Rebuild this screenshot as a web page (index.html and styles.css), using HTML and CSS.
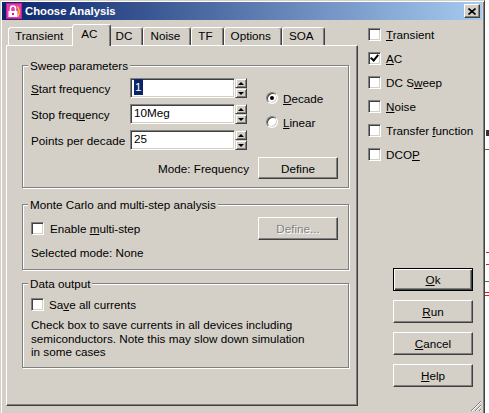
FILE: index.html
```html
<!DOCTYPE html>
<html lang="en">
<head>
  <meta charset="UTF-8" />
  <title>Choose Analysis</title>
  <link rel="stylesheet" href="styles.css">
</head>
<body>

<!-- ===== Dialog ===== -->
<div class="dialog">
  <div class="titlebar">
    <svg class="app-icon" viewBox="0 0 16 16">
      <rect width="16" height="16" fill="#c81e8e"/>
      <rect x="1" y="1" width="14" height="14" fill="#e43cae"/>
      <path d="M4.5 8V5.5a2.5 2.5 0 0 1 5 0V8" stroke="#fff" stroke-width="1.5" fill="none"/>
      <rect x="2.5" y="8" width="9" height="6" fill="#fff"/>
      <rect x="6" y="10" width="2" height="2" fill="#c81e8e"/>
      <path d="M11 3.5q4 3.5 1 10" stroke="#f4d400" stroke-width="1.3" fill="none"/>
    </svg>
    <span class="title">Choose Analysis</span>
    <span class="close">
      <svg width="8" height="7" viewBox="0 0 8 7"><path d="M0.5 0.5l7 6M7.5 0.5l-7 6" stroke="#000" stroke-width="1.6"/></svg>
    </span>
  </div>

  <div class="content">
    <!-- tabs + page -->
    <div class="tabs-area">
      <div class="tabs">
        <div class="tab">Transient</div>
        <div class="tab active">AC</div>
        <div class="tab">DC</div>
        <div class="tab">Noise</div>
        <div class="tab">TF</div>
        <div class="tab">Options</div>
        <div class="tab">SOA</div>
      </div>

      <div class="panel">
        <div class="group sweep-group">
          <span class="group-title">Sweep parameters</span>
          <div class="sweep">
            <div class="fields">
              <div class="field">
                <label><u>S</u>tart frequency</label>
                <div class="edit"><span class="sel">1</span></div>
                <div class="spin"><span class="up"></span><span class="down"></span></div>
              </div>
              <div class="field">
                <label>Stop freq<u>u</u>ency</label>
                <div class="edit">10Meg</div>
                <div class="spin"><span class="up"></span><span class="down"></span></div>
              </div>
              <div class="field">
                <label>Points per decade</label>
                <div class="edit">25</div>
                <div class="spin"><span class="up"></span><span class="down"></span></div>
              </div>
            </div>
            <div class="radios">
              <div class="radio-row"><span class="radio on"></span><span><u>D</u>ecade</span></div>
              <div class="radio-row"><span class="radio"></span><span><u>L</u>inear</span></div>
            </div>
          </div>
          <div class="mode">
            <span>Mode: Frequency</span>
            <span class="btn">Define</span>
          </div>
        </div>

        <div class="group multi-group">
          <span class="group-title">Monte Carlo and multi-step analysis</span>
          <div class="multi">
            <div class="check-row"><span class="check"></span><span>Enable <u>m</u>ulti-step</span></div>
            <span class="btn disabled">Define...</span>
          </div>
          <div class="selected-mode">Selected mode: None</div>
        </div>

        <div class="group data-group">
          <span class="group-title">Data output</span>
          <div class="check-row"><span class="check"></span><span>Sa<u>v</u>e all currents</span></div>
          <p class="note">Check box to save currents in all devices including<br>semiconductors. Note this may slow down simulation<br>in some cases</p>
        </div>
      </div>
    </div>

    <!-- analysis list + buttons -->
    <div class="side">
      <div class="checks">
        <div class="check-row"><span class="check"></span><span><u>T</u>ransient</span></div>
        <div class="check-row"><span class="check on"></span><span><u>A</u>C</span></div>
        <div class="check-row"><span class="check"></span><span>DC S<u>w</u>eep</span></div>
        <div class="check-row"><span class="check"></span><span><u>N</u>oise</span></div>
        <div class="check-row"><span class="check"></span><span>Transfer <u>f</u>unction</span></div>
        <div class="check-row"><span class="check"></span><span>DCO<u>P</u></span></div>
      </div>
      <div class="buttons">
        <span class="btn default"><span><u>O</u>k</span></span>
        <span class="btn"><span><u>R</u>un</span></span>
        <span class="btn"><span><u>C</u>ancel</span></span>
        <span class="btn"><span><u>H</u>elp</span></span>
      </div>
    </div>
  </div>

  <svg class="grip" width="12" height="12" viewBox="0 0 12 12">
    <path d="M11 1L1 11M11 5L5 11M11 9L9 11" stroke="#808080" stroke-width="1"/>
    <path d="M11 2L2 11M11 6L6 11M11 10L10 11" stroke="#fff" stroke-width="1"/>
  </svg>
</div>

<!-- bits of the schematic behind the dialog -->
<svg class="behind" width="4" height="413" viewBox="0 0 4 413">
  <rect x="0" y="149" width="4" height="1" fill="#2a8a2a"/>
  <rect x="1" y="130" width="3" height="6" fill="#333"/>
  <rect x="1" y="252" width="3" height="1" fill="#e02020"/>
  <rect x="1" y="264" width="3" height="1" fill="#e02020"/>
  <rect x="0" y="281" width="4" height="1" fill="#2a8a2a"/>
  <rect x="0" y="292" width="4" height="1" fill="#e02020"/>
  <rect x="0" y="295" width="4" height="1" fill="#e02020"/>
</svg>

</body>
</html>
```

FILE: styles.css
```css
:root { --face:#d4d0c8; --shadow:#808080; --dark:#404040; --hilite:#fff; }
* { box-sizing:border-box; }
body {
  margin:0; height:413px; overflow:hidden; background:#fff; display:flex; align-items:flex-start;
  font:11.7px "Liberation Sans", Arial, sans-serif; color:#000;
}
u { text-decoration:underline; text-underline-offset:1px; }

/* ===== Window frame ===== */
.dialog{
  position:relative;width:485px;height:416px;flex:none;background:var(--face);
  border:1px solid;border-color:var(--face) var(--dark) var(--dark) var(--face);
  box-shadow:inset 1px 1px var(--hilite),inset -1px -1px var(--shadow);
  padding:1px 2px 2px 1px;
}
.titlebar{
  height:18px;display:flex;align-items:center;color:#fff;
  background:linear-gradient(to right,#0a246a,#a6caf0);
}
.app-icon{width:16px;height:16px;margin-left:4px;}
.title{margin-left:3px;font-weight:bold;font-size:11.3px;}
.close{
  margin-left:auto;margin-right:2px;width:16px;height:14px;background:var(--face);
  display:flex;align-items:center;justify-content:center;
  border:1px solid;border-color:var(--hilite) var(--dark) var(--dark) var(--hilite);
  box-shadow:inset -1px -1px var(--shadow);
}
.grip{position:absolute;right:2px;bottom:3px;}
.behind{flex:none;}

.content{display:flex;align-items:flex-start;}

/* ===== Tabs ===== */
.tabs-area{margin-left:4px;padding-top:4px;width:352px;flex:none;}
.tabs{display:flex;align-items:flex-end;height:21px;padding-left:2px;}
.tab{
  height:18px;line-height:16px;padding:0 10px 0 6px;background:var(--face);
  border:1px solid;border-bottom:none;border-color:var(--hilite) var(--dark) transparent var(--hilite);
  box-shadow:inset -1px 0 var(--shadow);border-radius:3px 3px 0 0;
}
.tab.active{
  position:relative;z-index:1;height:22px;margin:0 -2px -1px;padding:0 12px 0 8px;line-height:18px;
}
.panel{
  height:361px;padding:19px 0 0 15px;
  border:1px solid;border-color:var(--hilite) var(--dark) var(--dark) var(--hilite);
  box-shadow:inset -1px -1px var(--shadow);
}

/* ===== Group boxes ===== */
.group{
  position:relative;width:327px;padding:12px 0 0 8px;
  border:1px solid var(--shadow);box-shadow:inset 1px 1px var(--hilite),1px 1px var(--hilite);
}
.group-title{
  position:absolute;top:-7px;left:5px;padding:0 2px;line-height:13px;background:var(--face);
}
.sweep-group{padding-bottom:8px;}
.multi-group{margin-top:16px;padding-bottom:10px;}
.data-group{margin-top:13px;padding-top:13px;padding-bottom:8px;}

.sweep{display:flex;}
.fields{width:216px;display:flex;flex-direction:column;gap:6px;}
.field{display:flex;align-items:center;height:20px;}
.field label{width:99px;white-space:nowrap;}
.edit{
  width:105px;height:20px;background:#fff;padding:0 3px;line-height:16px;
  border:1px solid;border-color:var(--shadow) var(--hilite) var(--hilite) var(--shadow);
  box-shadow:inset 1px 1px var(--dark),inset -1px -1px var(--face);
}
.sel{display:inline-block;background:#0a246a;color:#fff;padding:0 1px;}
.spin{width:12px;height:20px;display:flex;flex-direction:column;}
.spin span{
  height:10px;display:flex;align-items:center;justify-content:center;background:var(--face);
  border:1px solid;border-color:var(--face) var(--dark) var(--dark) var(--face);
  box-shadow:inset 1px 1px var(--hilite),inset -1px -1px var(--shadow);
}
.spin span::before{content:"";border-left:3px solid transparent;border-right:3px solid transparent;}
.spin .up::before{border-bottom:3px solid #000;}
.spin .down::before{border-top:3px solid #000;}

.radios{margin:12px 0 0 19px;display:flex;flex-direction:column;gap:8px;}
.radio-row{display:flex;align-items:center;gap:5px;height:16px;}
.radio{
  width:12px;height:12px;border-radius:50%;background:#fff;display:flex;align-items:center;justify-content:center;
  border:1px solid;border-color:var(--shadow) var(--hilite) var(--hilite) var(--shadow);
  box-shadow:inset 1px 1px var(--dark),inset -1px -1px var(--face);
}
.radio.on::after{content:"";width:4px;height:4px;border-radius:50%;background:#000;}

.mode{display:flex;align-items:center;justify-content:flex-end;gap:9px;margin-top:7px;padding-right:10px;}

.multi{display:flex;align-items:center;justify-content:space-between;height:23px;padding-right:10px;}
.selected-mode{margin-top:6px;line-height:13px;}

.note{margin:7px 0 0;line-height:13.5px;white-space:nowrap;}

/* ===== Checkboxes ===== */
.check-row{display:flex;align-items:center;gap:5px;height:14px;white-space:nowrap;}
.check{
  width:13px;height:13px;background:#fff;flex:none;display:flex;align-items:center;justify-content:center;
  border:1px solid;border-color:var(--shadow) var(--hilite) var(--hilite) var(--shadow);
  box-shadow:inset 1px 1px var(--dark),inset -1px -1px var(--face);
}
.multi .check-row{gap:6px;}
.check.on::after{
  content:"";width:3px;height:6px;margin-top:-2px;
  border:solid #000;border-width:0 2px 2px 0;transform:rotate(40deg);
}

/* ===== Buttons ===== */
.btn{
  display:flex;align-items:center;justify-content:center;width:80px;height:22px;background:var(--face);
  border:1px solid;border-color:var(--hilite) var(--dark) var(--dark) var(--hilite);
  box-shadow:inset -1px -1px var(--shadow);
}
.btn.disabled{height:23px;color:var(--shadow);text-shadow:1px 1px var(--hilite);}
.btn.default{border-color:#000;box-shadow:inset 1px 1px var(--hilite),inset -1px -1px var(--dark),inset -2px -2px var(--shadow);}

/* ===== Right column ===== */
.side{margin-left:10px;padding-top:2px;}
.checks .check-row{height:24px;}
.buttons{margin:102px 0 0 25px;display:flex;flex-direction:column;gap:9px;}
.buttons .btn{height:23px;}
```
